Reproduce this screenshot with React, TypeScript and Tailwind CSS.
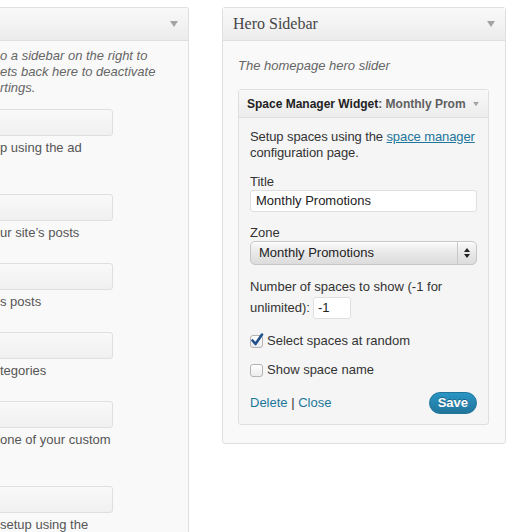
const sans = "font-['Liberation_Sans','Helvetica','Arial',sans-serif]";

function Arrow({ className = "" }: { className?: string }) {
  return (
    <svg width="8" height="6" viewBox="0 0 8 6" className={className}>
      <path d="M0 0h8L4 6z" fill="#a3a3a3" />
    </svg>
  );
}

function CollapsedWidget({ lines }: { lines: string[] }) {
  return (
    <div className="mb-[22px]">
      <div className="-ml-[20px] h-[27px] w-[133px] rounded-[3px] border border-[#dfdfdf] bg-gradient-to-b from-[#f9f9f9] to-[#f0f0f0]" />
      <div className="mt-[4px] text-[13px] leading-[16px] text-[#555]">
        {lines.map((l, i) => (
          <div key={i} className="h-[16px] whitespace-nowrap">
            {l}
          </div>
        ))}
      </div>
    </div>
  );
}

function Checkbox({ checked }: { checked?: boolean }) {
  return (
    <span className="relative inline-block h-[13px] w-[13px] shrink-0 rounded-[3px] border border-[#b4b4b4] bg-gradient-to-b from-white to-[#ececec]">
      {checked && (
        <svg width="14" height="14" viewBox="0 0 14 14" className="absolute -left-[1px] -top-[3px]">
          <path d="M2.5 7.5l3 3.5L12 1.5" fill="none" stroke="#1f4f8c" strokeWidth="2.6" strokeLinecap="round" strokeLinejoin="round" />
        </svg>
      )}
    </span>
  );
}

export default function App() {
  return (
    <div className={`flex h-[532px] w-[532px] overflow-hidden bg-white pt-[7px] ${sans}`}>
      {/* Left - available widgets (cut off) */}
      <div className="w-[189px] shrink-0 overflow-hidden rounded-tr-[3px] border-r border-t border-[#dfdfdf] bg-[#f9f9f9]">
        <div className="flex h-[33px] items-center justify-end border-b border-[#dfdfdf] bg-gradient-to-b from-[#f9f9f9] to-[#ececec] pr-[10px]">
          <Arrow />
        </div>
        <div className="pt-[7px] text-[13px] italic leading-[16px] text-[#666]">
          <div className="whitespace-nowrap">o a sidebar on the right to</div>
          <div className="whitespace-nowrap">ets back here to deactivate</div>
          <div className="whitespace-nowrap">rtings.</div>
        </div>
        <div className="mt-[13px]">
          <CollapsedWidget lines={["p using the ad", ""]} />
          <CollapsedWidget lines={["ur site’s posts"]} />
          <CollapsedWidget lines={["s posts"]} />
          <CollapsedWidget lines={["tegories"]} />
          <CollapsedWidget lines={["one of your custom", ""]} />
          <CollapsedWidget lines={["setup using the"]} />
        </div>
      </div>

      {/* Right - Hero Sidebar */}
      <div className="ml-[33px] h-[437px] w-[284px] shrink-0 rounded-[3px] border border-[#dfdfdf] bg-[#f9f9f9]">
        <div className="flex h-[33px] items-center justify-between border-b border-[#dfdfdf] bg-gradient-to-b from-[#f9f9f9] to-[#ececec] pl-[10px] pr-[10px]">
          <span className="font-['Liberation_Serif','Georgia',serif] text-[16px] text-[#464646]">Hero Sidebar</span>
          <Arrow />
        </div>
        <div className="px-[15px] pt-[17px] text-[13px] italic leading-[16px] text-[#666]">The homepage hero slider</div>

        <div className="ml-[15px] mr-[16px] mt-[15px] rounded-[3px] border border-[#dfdfdf] bg-[#f5f5f5]">
          <div className="flex h-[28px] items-center justify-between overflow-hidden border-b border-[#dfdfdf] bg-gradient-to-b from-[#f9f9f9] to-[#ececec] pl-[8px] pr-[10px]">
            <span className="whitespace-nowrap text-[12px] font-bold text-[#222]">
              Space Manager Widget<span className="text-[#606060]">: Monthly Prom</span>
            </span>
            <Arrow className="ml-[6px] shrink-0 scale-75" />
          </div>

          <div className="pb-[10px] pl-[11px] pr-[11px] pt-[11px] text-[13px] leading-[16px] text-[#333]">
            <p className="whitespace-nowrap tracking-[-0.1px]">
              Setup spaces using the{" "}
              <a className="text-[#21759b] underline">space manager</a>
              <br />
              configuration page.
            </p>

            <div className="mt-[13px]">Title</div>
            <div className="flex h-[22px] items-center rounded-[3px] border border-[#dfdfdf] bg-white px-[5px] text-[#222]">
              Monthly Promotions
            </div>

            <div className="mt-[13px]">Zone</div>
            <div className="flex h-[24px] items-center rounded-[5px] border border-[#c6c6c6] bg-gradient-to-b from-[#fafafa] via-[#e8e8e8] to-[#dcdcdc] text-[#222] shadow-[inset_0_1px_0_#fff]">
              <span className="flex-1 pl-[8px]">Monthly Promotions</span>
              <span className="flex h-full w-[19px] flex-col items-center justify-center gap-[2px] border-l border-[#c9c9c9]">
                <svg width="6" height="4" viewBox="0 0 6 4"><path d="M3 0L6 4H0z" fill="#222" /></svg>
                <svg width="6" height="4" viewBox="0 0 6 4"><path d="M0 0h6L3 4z" fill="#222" /></svg>
              </span>
            </div>

            <div className="mt-[14px]">Number of spaces to show (-1 for</div>
            <div className="mt-[2px] flex items-center gap-[3px]">
              <span>unlimited):</span>
              <span className="flex h-[22px] w-[38px] items-center rounded-[3px] border border-[#dfdfdf] bg-white px-[4px] text-[#222]">
                -1
              </span>
            </div>

            <label className="mt-[14px] flex items-center gap-[4px]">
              <Checkbox checked />
              <span>Select spaces at random</span>
            </label>
            <label className="mt-[13px] flex items-center gap-[4px]">
              <Checkbox />
              <span>Show space name</span>
            </label>

            <div className="mt-[14px] flex items-center justify-between">
              <span className="text-[#21759b]">
                Delete <span className="text-[#333]">|</span> Close
              </span>
              <button className="h-[22px] rounded-full border border-[#21759b] bg-gradient-to-b from-[#2a95c5] to-[#21759b] px-[8px] text-[13px] font-bold leading-[20px] text-white [text-shadow:0_-1px_0_rgba(0,0,0,0.3)]">
                Save
              </button>
            </div>
          </div>
        </div>
      </div>
    </div>
  );
}
